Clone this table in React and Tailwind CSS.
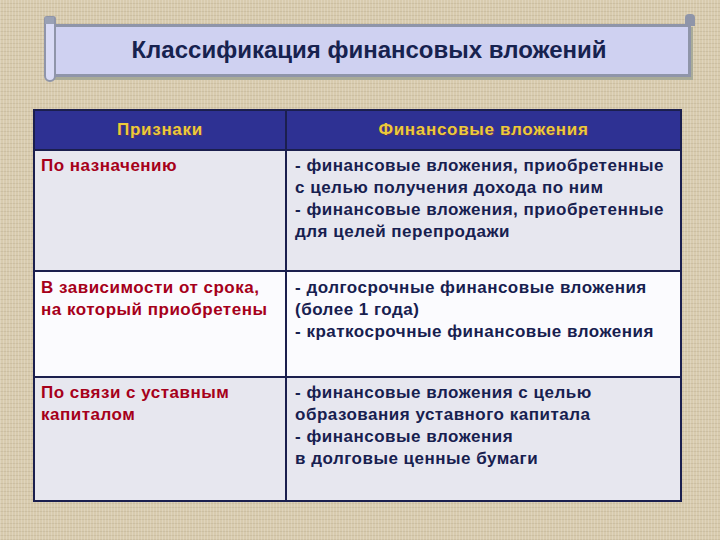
import React from "react";

const font = { fontFamily: '"Liberation Sans", Arial, sans-serif' };

function Cell({ children, className = "" }) {
  return <div className={"text-[17px] font-bold leading-[22px] tracking-[0.5px] " + className}>{children}</div>;
}

export default function App() {
  const rows = [
    {
      left: ["По назначению"],
      right: [
        "- финансовые вложения, приобретенные",
        "с целью получения дохода по ним",
        "- финансовые вложения, приобретенные",
        "для целей перепродажи",
      ],
      h: "h-[121px]",
      bg: "bg-[#e7e7ef]",
      pt: "pt-[4px]",
    },
    {
      left: ["В зависимости от срока,", "на который приобретены"],
      right: [
        "- долгосрочные финансовые вложения",
        "(более 1 года)",
        "- краткосрочные финансовые вложения",
      ],
      h: "h-[106px]",
      bg: "bg-[#fbfbfe]",
      pt: "pt-[5px]",
    },
    {
      left: ["По связи с уставным", "капиталом"],
      right: [
        "- финансовые вложения с целью",
        "образования уставного капитала",
        "- финансовые вложения",
        "в долговые ценные бумаги",
      ],
      h: "h-[122px]",
      bg: "bg-[#e7e7ef]",
      pt: "pt-[4px]",
    },
  ];

  return (
    <div
      style={font}
      className="w-[720px] h-[540px] overflow-hidden bg-[#d8cbae] bg-[repeating-linear-gradient(90deg,rgba(255,255,255,0.18)_0px,rgba(255,255,255,0.18)_1px,transparent_1px,transparent_3px),repeating-linear-gradient(0deg,rgba(120,100,70,0.12)_0px,rgba(120,100,70,0.12)_1px,transparent_1px,transparent_4px)] flex flex-col"
    >
      {/* Banner */}
      <div className="relative mt-[24px] ml-[51px] w-[640px] h-[53px]">
        <div className="h-full border-[3px] border-[#8f95a9] bg-[#cfd1f1] flex items-center justify-center shadow-[2px_3px_0_#a9ab98]">
          <span className="text-[24px] font-bold text-[#17224f] pr-[4px] pb-[1px]">
            Классификация финансовых вложений
          </span>
        </div>
        {/* left curl */}
        <div className="absolute left-[-7px] top-[-8px] w-[12px] h-[66px] rounded-b-[6px] rounded-t-[3px] border-[2px] border-[#8f95a9] bg-[#d9dbf5]" />
        <div className="absolute left-[-6px] top-[-7px] w-[9px] h-[7px] bg-[#9aa1b4]" />
        {/* right curl */}
        <div className="absolute right-[-4px] top-[-10px] w-[10px] h-[12px] rounded-t-[4px] bg-[#8f95a9]" />
      </div>

      {/* Table */}
      <div className="mt-[32px] ml-[33px] w-[649px] border-[2px] border-[#1b1f4e] flex flex-col">
        <div className="grid grid-cols-[252px_1fr] h-[40px] bg-[#2e3193] border-b-[2px] border-[#1b1f4e]">
          <div className="border-r-[2px] border-[#1b1f4e] flex items-center justify-center">
            <span className="text-[17px] font-bold tracking-[0.7px] text-[#ecca3a] [text-shadow:1px_1px_0_#55306a]">Признаки</span>
          </div>
          <div className="flex items-center justify-center">
            <span className="text-[17px] font-bold tracking-[0.7px] text-[#ecca3a] [text-shadow:1px_1px_0_#55306a]">Финансовые вложения</span>
          </div>
        </div>
        {rows.map((r, i) => (
          <div
            key={i}
            className={
              "grid grid-cols-[252px_1fr] " +
              r.h +
              " " +
              r.bg +
              (i < rows.length - 1 ? " border-b-[2px] border-[#1b1f4e]" : "")
            }
          >
            <div className={"border-r-[2px] border-[#1b1f4e] pl-[6px] " + r.pt}>
              {r.left.map((t, j) => (
                <Cell key={j} className="text-[#a6001a]">{t}</Cell>
              ))}
            </div>
            <div className={"pl-[8px] " + r.pt}>
              {r.right.map((t, j) => (
                <Cell key={j} className="text-[#17204f]">{t}</Cell>
              ))}
            </div>
          </div>
        ))}
      </div>
    </div>
  );
}
